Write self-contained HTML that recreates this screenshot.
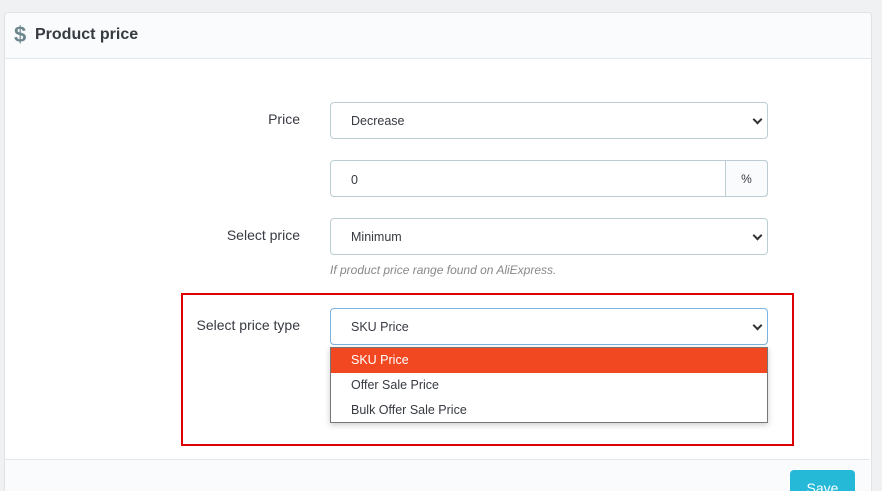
<!DOCTYPE html>
<html><head><style>
html,body{margin:0;width:882px;height:491px;overflow:hidden}
body{background:#eff1f2;font-family:"Liberation Sans",sans-serif;position:relative;color:#363a41}
.card{position:absolute;left:4px;top:12px;width:866px;height:485px;background:#fff;border:1px solid #dfe3e6;border-radius:4px}
.hd{position:absolute;left:0;top:0;right:0;height:45px;background:#fafbfc;border-bottom:1px solid #e4e7ea;border-radius:4px 4px 0 0}
.hd span{position:absolute;left:30px;top:13px;font-size:16px;font-weight:bold;color:#363a41}
.hd b{position:absolute;left:9px;top:9px;font-size:22px;color:#6c868e}
.lbl{position:absolute;font-size:14px;color:#363a41;text-align:right;width:200px}
.sel{position:absolute;left:330px;width:438px;height:37px;border:1px solid #bbcdd2;border-radius:4px;box-sizing:border-box;background:#fff;font-size:12.5px;padding:11px 0 0 20px}
.sel:after{content:"";position:absolute;right:6px;top:13px;width:5px;height:5px;border-right:2px solid #333;border-bottom:2px solid #333;transform:rotate(45deg)}
.help{position:absolute;left:330px;top:263px;font-size:12px;font-style:italic;color:#888}
.red{position:absolute;left:181px;top:293px;width:609px;height:149px;border:2px solid #d00}
.dd{position:absolute;left:330px;top:347px;width:438px;height:76px;border:1px solid #777;background:#fff;box-sizing:border-box;font-size:12.5px;box-shadow:0 2px 6px rgba(0,0,0,.2)}
.dd div{height:25px;line-height:25px;padding-left:20px}
.ft{position:absolute;left:5px;top:459px;width:865px;height:40px;background:#fafbfc;border-top:1px solid #e4e7ea}
.btn{position:absolute;left:790px;top:470px;width:65px;height:30px;background:#25b9d7;border-radius:4px;color:#fff;font-size:14px;text-align:center;line-height:36px}
</style></head><body>
<div class="card"><div class="hd"><b>$</b><span>Product price</span></div></div>
<div class="lbl" style="left:100px;top:111px">Price</div>
<div class="sel" style="top:102px">Decrease</div>
<div class="sel" style="top:160px;padding-top:12px">0</div>
<div style="position:absolute;left:725px;top:160px;width:43px;height:37px;box-sizing:border-box;border:1px solid #bbcdd2;border-radius:0 4px 4px 0;background:#fafbfc;font-size:12px;text-align:center;line-height:36px">%</div>
<div class="lbl" style="left:100px;top:227px">Select price</div>
<div class="sel" style="top:218px">Minimum</div>
<div class="help">If product price range found on AliExpress.</div>
<div class="red"></div>
<div class="lbl" style="left:100px;top:317px">Select price type</div>
<div class="sel" style="top:308px;border-color:#7cb3e0">SKU Price</div>
<div class="dd"><div style="background:#f24822;color:#fff">SKU Price</div><div>Offer Sale Price</div><div>Bulk Offer Sale Price</div></div>
<div class="ft"></div>
<div class="btn">Save</div>
</body></html>
